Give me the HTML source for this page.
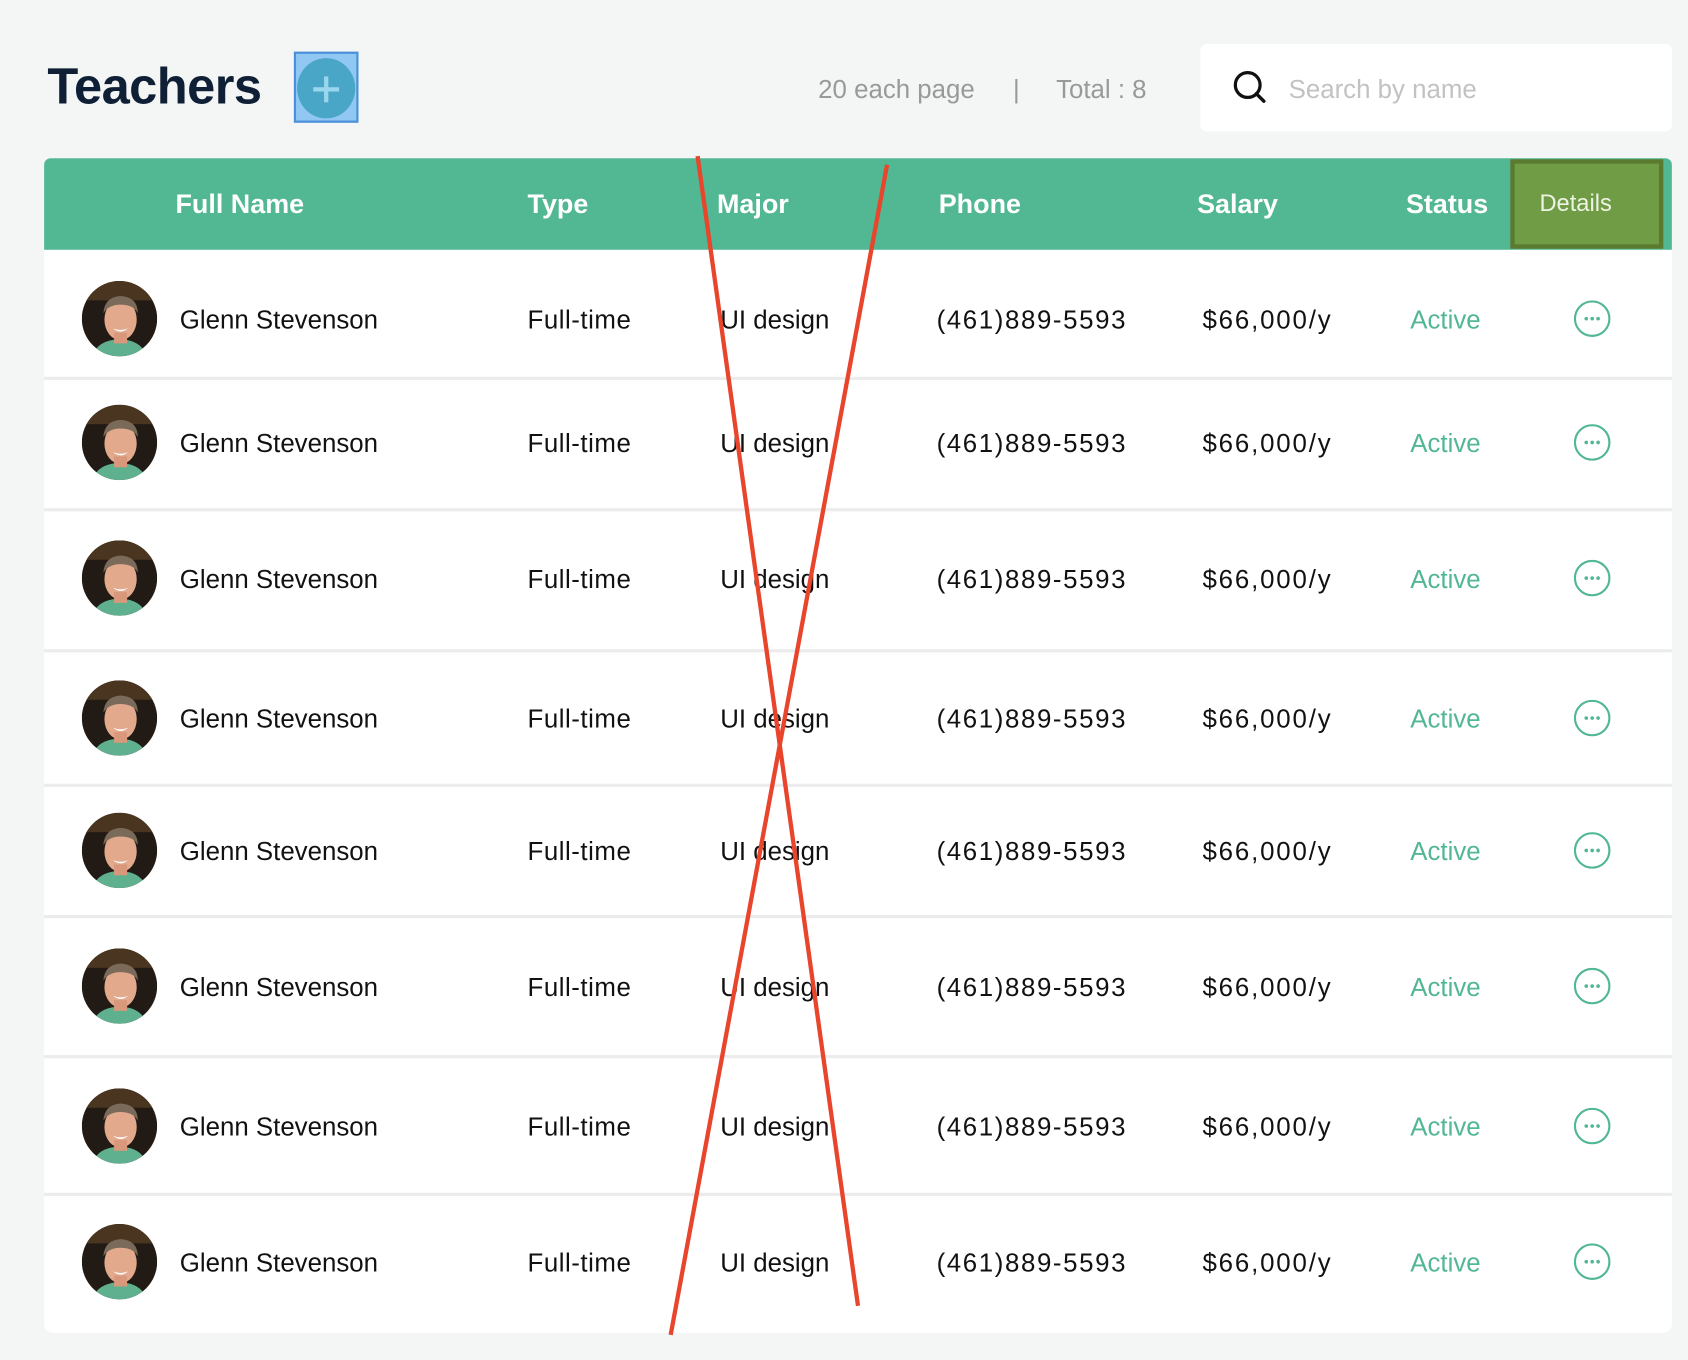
<!DOCTYPE html>
<html><head><meta charset="utf-8"><style>
*{margin:0;padding:0;box-sizing:border-box}
html,body{width:1688px;height:1360px;overflow:hidden;background:#f3f6f5;font-family:"Liberation Sans",sans-serif}
#w{position:absolute;left:0;top:0;width:1568px;height:1263px;transform:scale(1.07653);transform-origin:0 0}
.a{position:absolute;white-space:nowrap}
.t{font-size:24px;color:#111;line-height:30px;transform:translateY(-13px)}
.h{font-size:25px;color:#fff;font-weight:bold;top:175px;line-height:30px}
.sep{position:absolute;left:41px;width:1512px;height:3px;background:#ececec}
</style></head><body><div id="w">
<div class="a" style="left:44px;top:52px;font-size:47px;font-weight:bold;color:#0f1f35;letter-spacing:-0.5px">Teachers</div>
<div class="a" style="left:273px;top:48px;width:60px;height:66px;background:#90c8f3;border:2px solid #4a8fd8;overflow:hidden">
<div style="position:absolute;left:1px;top:4px;width:54px;height:56px;border-radius:50%;background:#4aa6c6"></div>
<div style="position:absolute;left:16px;top:30.5px;width:24px;height:4px;background:#9ad6ee"></div>
<div style="position:absolute;left:26px;top:20.5px;width:4px;height:24px;background:#9ad6ee"></div>
</div>
<div class="a" style="left:760px;top:70px;font-size:24px;color:#999">20 each page</div>
<div class="a" style="left:941px;top:70px;font-size:24px;color:#999">|</div>
<div class="a" style="left:981px;top:70px;font-size:24px;color:#999">Total : 8</div>
<div class="a" style="left:1115px;top:41px;width:438px;height:81px;background:#fff;border-radius:6px"></div>
<svg class="a" style="left:1142px;top:64px" width="38" height="36" viewBox="0 0 38 36"><circle cx="17" cy="15" r="11.5" fill="none" stroke="#111" stroke-width="3"/><line x1="25" y1="23" x2="32" y2="30" stroke="#111" stroke-width="3.2" stroke-linecap="round"/></svg>
<div class="a" style="left:1197px;top:70px;font-size:24px;color:#c2c2c2">Search by name</div>

<div class="a" style="left:41px;top:232px;width:1512px;height:1006px;background:#fff;border-radius:0 0 8px 8px"></div>
<div class="a" style="left:41px;top:147px;width:1512px;height:85px;background:#52b793;border-radius:6px 6px 0 0"></div>
<div class="a" style="left:1403px;top:148px;width:142px;height:83px;background:#6f9c45;border:4px solid #5a7a30"></div>
<div class="a h" style="left:163px">Full Name</div>
<div class="a h" style="left:490px">Type</div>
<div class="a h" style="left:666px">Major</div>
<div class="a h" style="left:872px">Phone</div>
<div class="a h" style="left:1112px">Salary</div>
<div class="a h" style="left:1306px">Status</div>
<div class="a" style="left:1430px;top:174px;font-size:22px;color:#eef3e4;line-height:30px">Details</div>

<div class="sep" style="top:350px"></div><div class="sep" style="top:472px"></div><div class="sep" style="top:603px"></div><div class="sep" style="top:728px"></div><div class="sep" style="top:850px"></div><div class="sep" style="top:980px"></div><div class="sep" style="top:1108px"></div>

<svg width="0" height="0" style="position:absolute"><defs>
<clipPath id="c"><circle cx="35" cy="35" r="35"/></clipPath>
<g id="av"><g clip-path="url(#c)"><rect width="70" height="70" fill="#221a14"/><rect x="0" y="0" width="70" height="18" fill="#4a3520"/>
<path d="M10 70 Q14 55 35 54 Q56 55 60 70Z" fill="#5fb08f"/>
<ellipse cx="36" cy="36" rx="15" ry="19" fill="#e2a98d"/>
<rect x="30" y="48" width="12" height="10" fill="#d9987b"/>
<path d="M20 30 Q21 15 36 14 Q52 15 52 30 Q48 22 36 22 Q25 22 20 30Z" fill="#7a6a5a"/>
<path d="M29 44 Q36 50 43 44 Q36 47 29 44Z" fill="#fff"/></g></g>
<g id="dt"><circle cx="17" cy="17" r="16" fill="none" stroke="#52b793" stroke-width="2"/><circle cx="11.5" cy="17" r="1.7" fill="#52b793"/><circle cx="17" cy="17" r="1.7" fill="#52b793"/><circle cx="22.5" cy="17" r="1.7" fill="#52b793"/></g>
</defs></svg>

<div id="rows"></div>
<script>
var cs=[296,411,537,667,790,916,1046,1172],h='';
cs.forEach(function(c){
h+='<svg class="a" style="left:76px;top:'+(c-35)+'px" width="70" height="70"><use href="#av"/></svg>';
h+='<div class="a t" style="left:167px;top:'+c+'px">Glenn Stevenson</div>';
h+='<div class="a t" style="left:490px;top:'+c+'px;letter-spacing:0.5px">Full-time</div>';
h+='<div class="a t" style="left:669px;top:'+c+'px">UI design</div>';
h+='<div class="a t" style="left:870px;top:'+c+'px;letter-spacing:1.5px">(461)889-5593</div>';
h+='<div class="a t" style="left:1117px;top:'+c+'px;letter-spacing:1.7px">$66,000/y</div>';
h+='<div class="a t" style="left:1310px;top:'+c+'px;color:#52b793">Active</div>';
h+='<svg class="a" style="left:1462px;top:'+(c-17)+'px" width="34" height="34"><use href="#dt"/></svg>';
});
document.getElementById('rows').innerHTML=h;
</script>
<svg class="a" style="left:0;top:0" width="1568" height="1263"><line x1="648" y1="145" x2="797" y2="1213" stroke="#e8452c" stroke-width="4"/><line x1="824" y1="153" x2="623" y2="1240" stroke="#e8452c" stroke-width="4"/></svg>
</div></body></html>
